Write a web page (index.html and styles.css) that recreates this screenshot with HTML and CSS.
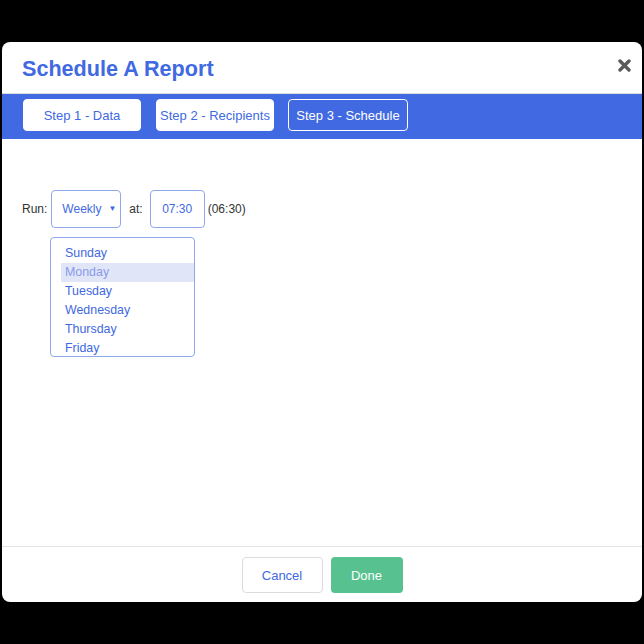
FILE: index.html
```html
<!DOCTYPE html>
<html>
<head>
    <meta charset="UTF-8">
    <title>Schedule A Report</title>
    <link rel="stylesheet" href="styles.css">
</head>
<body>
    <div class="modal">
        <div class="modal-header">
            <h1>Schedule A Report</h1>
            <span class="close">
                <svg width="13" height="13" viewBox="0 0 13 13"><path d="M2 2 L11 11 M11 2 L2 11" stroke="#5a5a5a" stroke-width="3.4" stroke-linecap="round"/></svg>
            </span>
        </div>

        <div class="steps">
            <button class="step">Step 1 - Data</button>
            <button class="step">Step 2 - Recipients</button>
            <button class="step active">Step 3 - Schedule</button>
        </div>

        <div class="modal-body">
            <div class="run-row">
                <span class="label">Run:</span>
                <div class="select">Weekly <span class="arrow">&#9660;</span></div>
                <span class="label">at:</span>
                <div class="time">07:30</div>
                <span class="utc">(06:30)</span>
            </div>

            <div class="day-list">
                <div class="day">Sunday</div>
                <div class="day selected">Monday</div>
                <div class="day">Tuesday</div>
                <div class="day">Wednesday</div>
                <div class="day">Thursday</div>
                <div class="day">Friday</div>
            </div>
        </div>

        <div class="modal-footer">
            <button class="btn cancel">Cancel</button>
            <button class="btn done">Done</button>
        </div>
    </div>
</body>
</html>
```

FILE: styles.css
```css
body {
    margin: 0;
    background-color: #000;
    font-family: "Liberation Sans", Arial, sans-serif;
    padding: 42px 2px 0 2px;
}

.modal {
    background: white;
    border-radius: 8px;
    height: 560px;
    display: flex;
    flex-direction: column;
    overflow: hidden;
}

.modal-header {
    height: 51px;
    border-bottom: 1px solid #dcdcdc;
    display: flex;
    align-items: center;
    justify-content: space-between;
    padding: 0 11px 0 20px;
}

.modal-header h1 {
    margin: 0;
    font-size: 21.6px;
    color: #4169e1;
    padding-top: 3px;
}

.close {
    display: flex;
    padding-bottom: 4px;
}

.steps {
    background-color: #4169e1;
    height: 45px;
    padding: 5px 0 0 21px;
    box-sizing: border-box;
    display: flex;
    align-items: flex-start;
    gap: 15px;
}

.step {
    font-family: inherit;
    font-size: 13px;
    height: 32px;
    width: 118px;
    border: 1px solid white;
    border-radius: 4px;
    background: white;
    color: #4169e1;
    padding: 0;
}

.step.active {
    background: transparent;
    color: white;
    width: 120px;
    margin-left: -1px;
}

.modal-body {
    flex: 1;
    padding: 50px 20px 0 20px;
}

.run-row {
    display: flex;
    align-items: center;
    font-size: 12px;
    color: #333;
    height: 38px;
    padding-top: 1px;
}

.label {
    margin-right: 4px;
}

.select {
    width: 70px;
    height: 38px;
    box-sizing: border-box;
    border: 1px solid #8fa8ec;
    border-radius: 4px;
    display: flex;
    align-items: center;
    padding-left: 10px;
    color: #4169e1;
    position: relative;
    margin-right: 8px;
}

.arrow {
    position: absolute;
    right: 4px;
    top: 13px;
    font-size: 8px;
}

.time {
    width: 55px;
    height: 38px;
    box-sizing: border-box;
    border: 1px solid #8fa8ec;
    border-radius: 4px;
    display: flex;
    align-items: center;
    justify-content: center;
    color: #4169e1;
    margin-left: 3px;
    margin-right: 3px;
}

.day-list {
    margin: 9px 0 0 28px;
    width: 145px;
    height: 120px;
    box-sizing: border-box;
    border: 1px solid #8fa8ec;
    border-radius: 4px;
    padding: 6px 0 0 10px;
    overflow: hidden;
}

.day {
    height: 19px;
    line-height: 19px;
    font-size: 12.4px;
    color: #4169e1;
    padding-left: 4px;
}

.day.selected {
    background-color: #e0e6f8;
    color: #8a9be8;
}

.modal-footer {
    border-top: 1px solid #e4e4e4;
    height: 56px;
    box-sizing: border-box;
    padding-top: 10px;
    display: flex;
    justify-content: center;
    align-items: flex-start;
    gap: 8px;
}

.btn {
    font-family: inherit;
    font-size: 13px;
    height: 36px;
    border-radius: 4px;
    padding: 0;
}

.cancel {
    width: 81px;
    background: white;
    border: 1px solid #dcdcdc;
    color: #4169e1;
}

.done {
    width: 72px;
    background: #57c28f;
    border: none;
    color: white;
}
```
